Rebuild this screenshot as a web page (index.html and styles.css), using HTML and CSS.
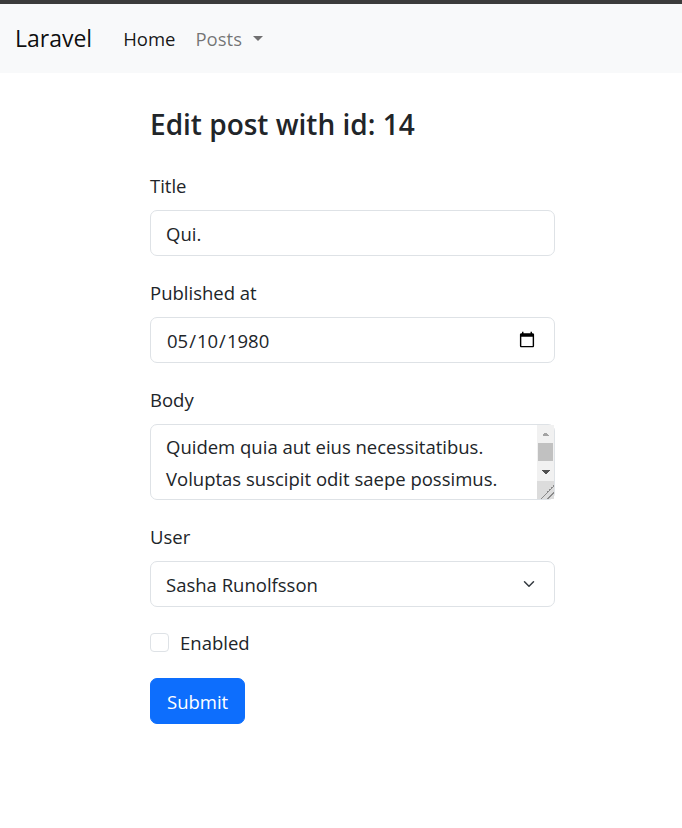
FILE: index.html
```html
<!DOCTYPE html>
<html lang="en">
<head>
<meta charset="utf-8">
<title>Edit post</title>
<link rel="stylesheet" href="styles.css">
</head>
<body>
<div class="topbar"></div>
<nav class="navbar">
  <a class="brand" href="#">Laravel</a>
  <a class="nav-link active" href="#">Home</a>
  <a class="nav-link dropdown-toggle" href="#">Posts</a>
</nav>
<main class="main">
  <h4 class="heading">Edit post with id: 14</h4>
  <form class="form">
    <div class="group">
      <label class="label" for="title">Title</label>
      <input class="control" id="title" type="text" value="Qui.">
    </div>
    <div class="group">
      <label class="label" for="published">Published at</label>
      <input class="control date" id="published" type="date" value="1980-05-10">
    </div>
    <div class="group">
      <label class="label" for="body">Body</label>
      <div class="area-wrap">
        <textarea class="control area" id="body">Quidem quia aut eius necessitatibus.
Voluptas suscipit odit saepe possimus.
Et in aut quia.</textarea>
        <div class="fake-scroll" aria-hidden="true">
          <div class="sb-btn sb-up"></div>
          <div class="sb-track"><div class="sb-thumb"></div></div>
          <div class="sb-btn sb-down"></div>
          <div class="sb-resizer"></div>
        </div>
      </div>
    </div>
    <div class="group">
      <label class="label" for="user">User</label>
      <div class="select-wrap">
        <select class="control select" id="user">
          <option>Sasha Runolfsson</option>
        </select>
        <svg class="chevron" width="16" height="12" viewBox="0 0 16 16" aria-hidden="true"><path fill="none" stroke="#343a40" stroke-linecap="round" stroke-linejoin="round" stroke-width="2" d="m2 5 6 6 6-6"/></svg>
      </div>
    </div>
    <div class="check">
      <input class="check-input" id="enabled" type="checkbox">
      <label class="check-label" for="enabled">Enabled</label>
    </div>
    <button class="btn" type="submit">Submit</button>
  </form>
</main>
</body>
</html>
```
FILE: styles.css
```css
* { box-sizing: border-box; }
body {
  margin: 0;
  font-family: "Open Sans", "Noto Sans", sans-serif;
  color: #212529;
  background: #fff;
}
.topbar { height: 4px; background: #3b3b3b; }
.navbar {
  height: 69px;
  background: #f8f9fa;
  display: flex;
  align-items: center;
  padding: 0 15px;
}
.brand {
  font-size: 23px;
  color: rgba(0,0,0,.95);
  text-decoration: none;
  margin-right: 21px;
  line-height: 1.5;
}
.nav-link {
  font-size: 18.5px;
  padding: 0 10px;
  text-decoration: none;
  color: rgba(0,0,0,.55);
  line-height: 1.5;
}
.nav-link.active { color: rgba(0,0,0,.92); }
.dropdown-toggle::after {
  content: "";
  display: inline-block;
  margin-left: 11px;
  vertical-align: .255em;
  border-top: .3em solid;
  border-right: .3em solid transparent;
  border-left: .3em solid transparent;
  border-bottom: 0;
}
.main { width: 405px; margin-left: 150px; padding-top: 34px; }
.heading {
  margin: 0 0 29px;
  font-size: 28px;
  font-weight: 600;
  line-height: 1.25;
}
.form { display: flex; flex-direction: column; }
.group { margin-bottom: 22px; display: flex; flex-direction: column; }
.label {
  font-size: 18.5px;
  line-height: 29px;
  margin-bottom: 10px;
}
.control {
  display: block;
  width: 100%;
  height: 46px;
  padding: 0 15px;
  font-family: inherit;
  font-size: 18.5px;
  color: #212529;
  background: #fff;
  border: 1px solid #dee2e6;
  border-radius: 7px;
  outline: none;
}
.date { padding-right: 16px; }
.area-wrap { position: relative; }
.area {
  height: 76px;
  padding: 6px 32px 6px 15px;
  line-height: 32px;
  resize: none;
  overflow: hidden;
  white-space: pre-wrap;
}
.fake-scroll {
  position: absolute;
  top: 1px;
  right: 1px;
  bottom: 1px;
  width: 17px;
  display: flex;
  flex-direction: column;
  background: #f1f1f1;
  pointer-events: none;
}
.sb-btn {
  height: 18px;
  flex: none;
  background-repeat: no-repeat;
  background-position: center;
  background-size: 8px 4px;
}
.sb-up { background-image: conic-gradient(from 135deg at 50% 0, #a3a3a3 90deg, transparent 0); }
.sb-down { background-image: conic-gradient(from -45deg at 50% 100%, #505050 90deg, transparent 0); }
.sb-track { flex: 1; padding: 0 1px; }
.sb-thumb { height: 18px; background: #c1c1c1; }
.sb-resizer {
  height: 18px;
  flex: none;
  background: #dcdcdc linear-gradient(135deg, transparent 60%, #8a8a8a 60% 65%, transparent 65% 78%, #8a8a8a 78% 83%, transparent 83%);
}
.select-wrap { position: relative; }
.select { appearance: none; -webkit-appearance: none; padding-right: 45px; }
.chevron { position: absolute; right: 18px; top: 17px; pointer-events: none; }
.check { display: flex; align-items: center; margin: -1px 0 21px; }
.check-input {
  appearance: none;
  -webkit-appearance: none;
  width: 19px;
  height: 19px;
  margin: 0 11px 0 0;
  border: 1px solid #dee2e6;
  border-radius: 4px;
  background: #fff;
}
.check-label { font-size: 18.5px; line-height: 29px; }
.btn {
  align-self: flex-start;
  height: 46px;
  padding: 0 16px;
  font-family: inherit;
  font-size: 18.5px;
  color: #fff;
  background: #0d6efd;
  border: 1px solid #0d6efd;
  border-radius: 7px;
}
```
